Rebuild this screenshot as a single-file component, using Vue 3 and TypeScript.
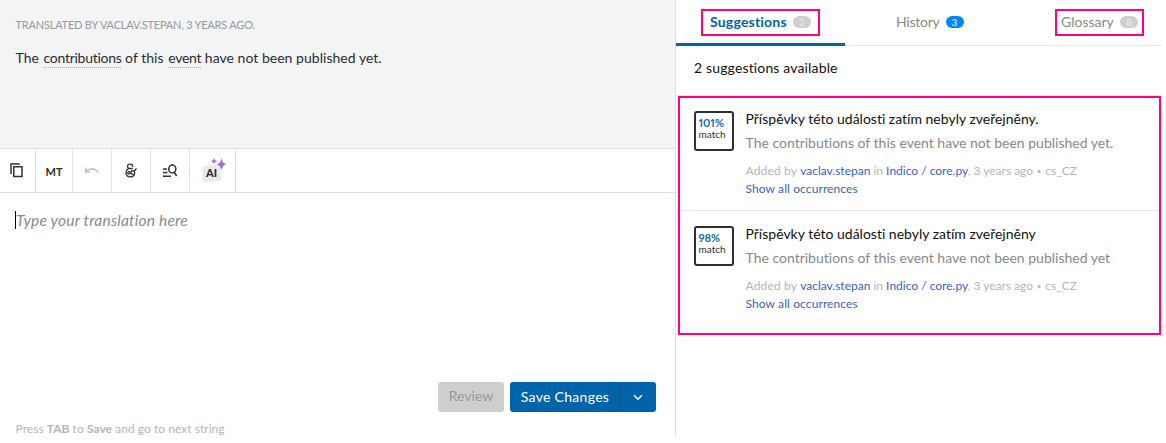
<script setup lang="ts">
interface Suggestion {
  score: string
  text: string
  source: string
}

const suggestions: Suggestion[] = [
  {
    score: '101%',
    text: 'Příspěvky této události zatím nebyly zveřejněny.',
    source: 'The contributions of this event have not been published yet.',
  },
  {
    score: '98%',
    text: 'Příspěvky této události nebyly zatím zveřejněny',
    source: 'The contributions of this event have not been published yet',
  },
]
</script>

<template>
  <main class="app">
    <section class="editor">
      <header class="source">
        <p class="credit">TRANSLATED BY VACLAV.STEPAN, 3 YEARS AGO.</p>
        <p class="string">The <u>contributions</u> of this <u>event</u> have not been published yet.</p>
      </header>
      <nav class="tools">
        <button class="tool copy">
          <svg width="14" height="16" viewBox="0 0 14 16" fill="none" stroke="#333" stroke-width="1.5"><path d="M1 11V1H9.800M3.800 3.700h8.200v9.800H3.800z" /></svg>
        </button>
        <button class="tool mt"><b>MT</b></button>
        <button class="tool undo">
          <svg width="16" height="10" viewBox="0 0 16 10"><path d="M1 1v6h6L4.700 4.900C7.500 2.700 11.500 3.300 13.600 7.300L14.900 6.700C12.500 1.600 7.200.9 3.500 3.600z" fill="#c8c8c8" /></svg>
        </button>
        <button class="tool amp">
          <svg width="12" height="16" viewBox="0 0 12 16" fill="none" stroke="#333" stroke-width="1.300" stroke-linecap="round"><path d="M7.600 3.400C7.700.6 2.800.4 2.500 3.200c-.1 1.500 1.200 2.500 3.100 2.300h1.600M4.600 5.600C.1 6-.3 13.400 4.900 13.900c5.200.3 6.300-5.900 2.700-6.200-2.400 0-2 3.800-4.100 3.300-1.500-.6-.4-3.100 1.200-2.200 1.500.8 1.600 2.900 3.200 2.200M7.600 7.700c1.500.2 3.200-.4 3.500-2" /></svg>
        </button>
        <button class="tool find">
          <svg width="16" height="14" viewBox="0 0 16 14" fill="none" stroke="#333" stroke-width="1.600"><path d="M1 5h4M1 8.500h4.500M1 12.200h8" /><ellipse cx="10.300" cy="5" rx="3.500" ry="4" /><path d="m12 8 2.700 4" /></svg>
        </button>
        <button class="tool ai">
          <svg width="26" height="26" viewBox="0 0 26 26"><path d="M3.500 8 19 6.500Q21 6.500 21 8.500V21q0 1.500-1.500 1.600L4.500 24q-2 0-2-2V9.500Q2.500 8.200 3.500 8z" fill="#e9eaee" /><path d="M21.500.5 23.100 4.500 26 6.200 23.100 7.900 21.500 12 19.900 7.900 17 6.200 19.900 4.500zM14 0l1 2.200 2.200 1-2.200 1L14 6.500l-1-2.300-2.200-1 2.200-1z" fill="#9b72d6" /></svg>
          <b class="ai-label">AI</b>
        </button>
      </nav>
      <div class="field"><i>Type your translation here</i></div>
      <div class="actions">
        <button class="review">Review</button>
        <div class="save">
          <button class="save-main">Save Changes</button>
          <button class="save-more"><svg width="10" height="7" viewBox="0 0 10 7"><path d="m1 1.200 4 4 4-4" fill="none" stroke="#fff" stroke-width="1.600" /></svg></button>
        </div>
      </div>
      <p class="hint">Press <b>TAB</b> to <b>Save</b> and go to next string</p>
    </section>

    <aside class="panel">
      <nav class="tabs">
        <a class="tab active"><span class="frame">Suggestions<em>2</em></span></a>
        <a class="tab history"><span class="frame plain">History<em class="blue">3</em></span></a>
        <a class="tab glossary"><span class="frame">Glossary<em>8</em></span></a>
      </nav>
      <h2 class="count">2 suggestions available</h2>
      <div class="list">
        <article v-for="s in suggestions" :key="s.score" class="item">
          <div class="match"><b>{{ s.score }}</b><span>match</span></div>
          <div class="body">
            <p class="text">{{ s.text }}</p>
            <p class="orig">{{ s.source }}</p>
            <p class="meta"><span class="by">Added by </span><a>vaclav.stepan</a> in <a>Indico / core.py</a>, 3 years ago <span class="dot">•</span> cs_CZ</p>
            <p class="more"><a>Show all occurrences</a></p>
          </div>
        </article>
      </div>
    </aside>
  </main>
</template>

<style>
body { background: #fff; }
</style>
<style scoped>
* { box-sizing: border-box; margin: 0; }
.app { display: flex; width: 1161px; height: 437px; font-family: Lato, "Open Sans", sans-serif; font-size: 14px; font-variant-ligatures: none; color: #2c2d2f; }
button { border: 0; background: none; padding: 0; font: inherit; font-variant-ligatures: none; color: inherit; }
svg { display: block; }
.editor { width: 676px; border-right: 1px solid #dcdfe5; display: flex; flex-direction: column; }
.source { height: 149px; background: #f3f4f6; border-bottom: 1px solid #dcdfe5; padding: 15px 15.500px 0; }
.credit { font-size: 11px; line-height: 20px; letter-spacing: -.2px; color: #999; }
.string { margin-top: 13px; line-height: 20px; letter-spacing: .03px; }
.string u { text-decoration: none; border-bottom: 1px dotted #aaa; padding-bottom: 1px; letter-spacing: -.28px; margin-left: 1px; }
.tools { display: flex; height: 44px; border-bottom: 1px solid #dcdfe5; }
.tool { display: flex; align-items: center; justify-content: center; border-right: 1px solid #dcdfe5; width: 39px; }
.copy { width: 36px; padding-right: 2px; }
.mt { width: 37px; font-size: 11px; padding-top: 2px; }
.ai { width: 46px; position: relative; }
.ai-label { position: absolute; left: 16px; top: 17px; font-size: 11px; font-weight: 900; line-height: 14px; }
.field { flex: 1; padding: 18px 15px 0; font-size: 15.500px; letter-spacing: .2px; color: #8a8a8a; }
.field i { display: inline-block; border-left: 1px solid #000; height: 18px; line-height: 18px; }
.actions { display: flex; justify-content: flex-end; gap: 6px; padding-right: 19px; height: 30px; }
.review { width: 66px; padding-bottom: 3px; background: #cecece; color: #999; border-radius: 3px; }
.save { display: flex; width: 146px; background: #0064ab; color: #fff; border-radius: 3px; }
.save-main { width: 111px; padding-bottom: 2px; border-right: 1px solid #00538e; letter-spacing: .3px; }
.save-more { flex: 1; display: grid; place-items: center; padding-right: 1px; }
.hint { margin-top: 8px; font-size: 12px; line-height: 18px; height: 17px; letter-spacing: .04px; color: #b5b5b5; padding-left: 15.500px; }
.panel { width: 485px; }
.tabs { display: flex; height: 46px; border-bottom: 1px solid #e6e7e9; }
.tab { flex: none; color: #888; }
.tab.active { width: 169px; border-bottom: 3px solid #0064ab; color: #0064ab; font-weight: bold; height: 46px; padding-left: 25px; letter-spacing: .2px; }
.history { width: 169px; padding-left: 43px; letter-spacing: -.25px; }
.glossary { padding-left: 41px; }
.frame { display: flex; align-items: center; width: 119px; height: 27px; margin-top: 9px; padding: 0 0 1px 7px; border: 2px solid #ff0080; line-height: 16px; }
.glossary .frame { width: 89px; padding-left: 4px; }
.frame.plain { border-color: transparent; padding-left: 6px; }
.frame em { margin-left: 6px; width: 18px; height: 12px; border-radius: 6px; background: #cecece; color: #eee; font: 10px/12px Lato, sans-serif; letter-spacing: 0; text-align: center; }
.frame em.blue { background: #0087ee; }
.count { font-size: 14px; font-weight: normal; line-height: 20px; height: 49px; padding: 12px 18px 0; letter-spacing: .15px; color: #111; }
.list { position: relative; border-top: 1px solid #e6e7e9; height: 240px; }
.list::after { content: ""; position: absolute; inset: 0 0 0 2px; border: 2px solid #ff0080; pointer-events: none; }
.item { display: flex; gap: 11.500px; height: 115px; padding: 15px 0 0 18px; border-bottom: 1px solid #e6e7e9; }
.item:last-child { border: 0; }
.match { width: 40px; height: 40px; border: 2px solid #2f2f31; border-radius: 3px; padding: 4px 0 0 2.500px; display: flex; flex-direction: column; align-items: flex-start; font-size: 10px; line-height: 11px; }
.match b { font-size: 11px; line-height: 12px; color: #0b6cb5; font-variant-numeric: proportional-nums; }
.text { margin-top: -1px; line-height: 18px; color: #111; }
.orig { line-height: 20px; margin-top: 5px; color: #888; }
.meta, .more { font-size: 12px; line-height: 18px; color: #b5b5b5; }
.meta { margin-top: 9px; }
.by { letter-spacing: .17px; }
.dot { font-size: 8px; line-height: 1; vertical-align: 1px; padding: 0 1px 0 .5px; }
.meta a, .more a { color: #3b63c4; }
.more { letter-spacing: .1px; }
</style>
